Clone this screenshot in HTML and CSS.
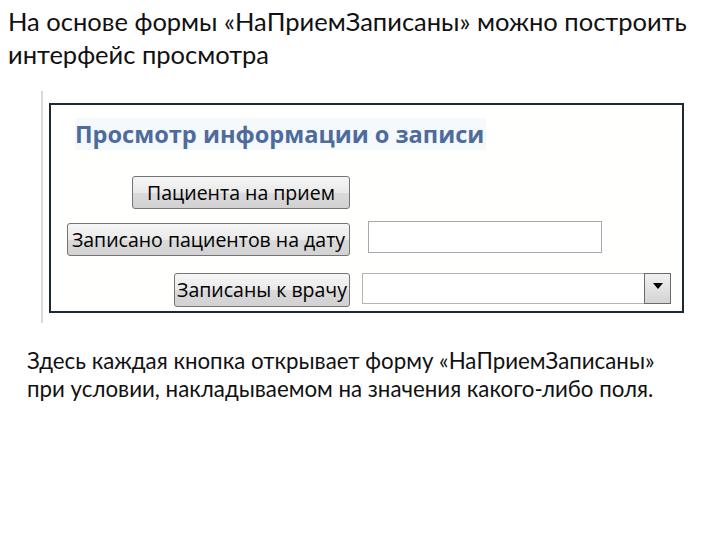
FILE: index.html
```html
<!DOCTYPE html>
<html lang="ru">
<head>
<meta charset="utf-8">
<link rel="stylesheet" href="styles.css">
</head>
<body>
<p class="intro">На основе формы «НаПриемЗаписаны» можно построить интерфейс просмотра</p>
<div class="figure">
  <div class="frame">
    <div class="title-row"><span class="title">Просмотр информации о записи</span></div>
    <div class="row row1">
      <div class="cell"><button class="btn b1">Пациента на прием</button></div>
    </div>
    <div class="row row2">
      <div class="cell"><button class="btn b2">Записано пациентов на дату</button></div>
      <div class="textbox"></div>
    </div>
    <div class="row row3">
      <div class="cell"><button class="btn b3">Записаны к врачу</button></div>
      <div class="combo"><div class="combo-field"></div><div class="combo-btn"><svg width="12" height="8" viewBox="0 0 12 8"><path d="M1 1 L11 1 L6 7 Z" fill="#000"/></svg></div></div>
    </div>
  </div>
</div>
<p class="note">Здесь каждая кнопка открывает форму «НаПриемЗаписаны» при условии, накладываемом на значения какого-либо поля.</p>
</body>
</html>
```
FILE: styles.css
```css
html, body { margin: 0; padding: 0; background: #fff; }
body { width: 720px; height: 540px; overflow: hidden; }
.intro {
  margin: 5px 0 0 0;
  padding: 0 10px 0 8px;
  font-family: Lato, "Open Sans", sans-serif;
  font-size: 25.5px;
  line-height: 33px;
  color: #111;
}
.figure {
  margin: 20px 0 0 41px;
  border-left: 2px solid #d6dae2;
  padding: 12px 0 10px 6px;
  width: 640px;
}
.frame {
  width: 631px;
  height: 206px;
  border: 2px solid #1b2a33;
  background: #fffffd;
  box-sizing: content-box;
}
.title-row { padding: 13px 0 0 24px; height: 58px; }
.title {
  font-family: "Open Sans", "DejaVu Sans", sans-serif;
  font-weight: 700;
  font-size: 23.6px;
  line-height: 32px;
  color: #4d6c9b;
  background: #f6f9fc;
  padding-right: 2px;
}
.row { display: flex; align-items: center; }
.cell { width: 299px; display: flex; justify-content: flex-end; }
.btn {
  font-family: "Open Sans", "DejaVu Sans", sans-serif;
  font-size: 19.5px;
  color: #000;
  border: 1px solid #747474;
  border-radius: 3px;
  background: linear-gradient(#f6f6f6, #e9e9e9 50%, #dadada 51%, #d2d2d2);
  padding: 0;
  margin: 0;
  height: 33px;
  line-height: 30px;
  white-space: nowrap;
  overflow: hidden;
}
.b1 { width: 218px; }
.row2 { margin-top: 14px; }
.b2 { width: 283px; height: 33px; }
.row3 { margin-top: 17px; }
.b3 { width: 176px; height: 34px; }
.textbox {
  margin-left: 18px;
  width: 232px;
  height: 30px;
  border: 1px solid #a8a8a8;
  background: #fff;
  margin-top: -6px;
}
.combo {
  margin-left: 12px;
  width: 309px;
  height: 31px;
  display: flex;
  margin-top: -3px;
}
.combo-field {
  flex: 1;
  border: 1px solid #b4b4b4;
  border-right: none;
  background: #fff;
}
.combo-btn {
  width: 25px;
  border: 1px solid #6a6a6a;
  background: linear-gradient(#f0f0f0, #d4d4d4);
  display: flex;
  align-items: center;
  justify-content: center;
}
.combo-btn svg { margin-top: -6px; }
.note {
  margin: 24px 0 0 27px;
  font-family: Lato, "Open Sans", sans-serif;
  font-size: 22.3px;
  line-height: 28px;
  color: #111;
  width: 645px;
}
```
